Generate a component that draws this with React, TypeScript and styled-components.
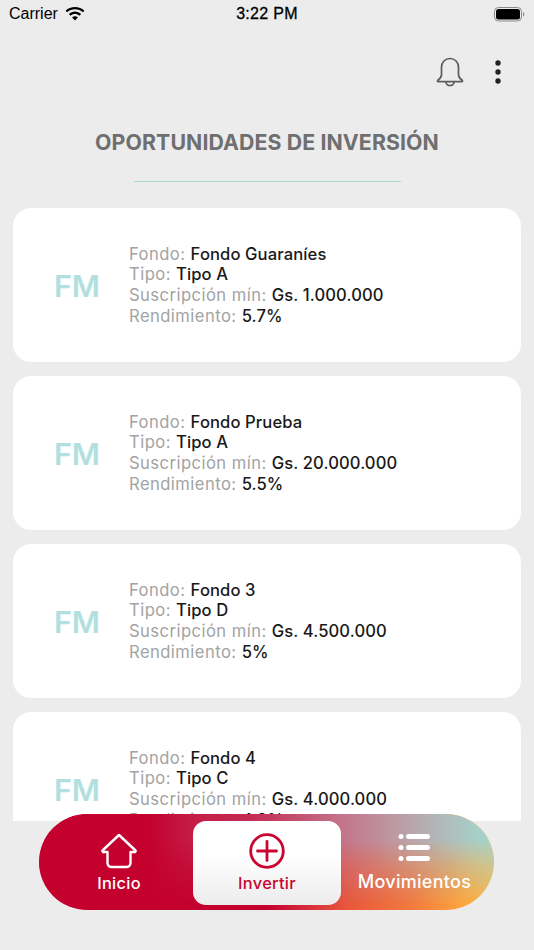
import React from "react";
import styled, { createGlobalStyle } from "styled-components";

const Global = createGlobalStyle`
  html, body { margin: 0; padding: 0; background: #ececec; }
  body { font-family: Inter, "Liberation Sans", sans-serif; }
`;

const Screen = styled.div`
  position: relative;
  width: 534px;
  height: 950px;
  overflow: hidden;
  background: #ececec;
  display: flex;
  flex-direction: column;
`;

const StatusBar = styled.div`
  height: 28px;
  flex: none;
  display: grid;
  grid-template-columns: 1fr auto 1fr;
  align-items: center;
  padding: 0 9px;
  font-family: "Liberation Sans", Arial, sans-serif;
  font-size: 16px;
  color: #000;
`;

const Carrier = styled.div`
  display: flex;
  align-items: center;
  gap: 7px;
`;

const Clock = styled.div`
  font-weight: 400;
  -webkit-text-stroke: 0.3px #000;
  letter-spacing: 0.3px;
`;

const Battery = styled.div`
  justify-self: end;
  display: flex;
`;

const ActionBar = styled.div`
  flex: none;
  height: 62px;
  display: flex;
  justify-content: flex-end;
  align-items: center;
  gap: 31px;
  padding: 0 33px 0 0;
  margin-top: 13px;
`;

const Title = styled.h1`
  margin: 28px 0 0;
  text-align: center;
  font-size: 21.3px;
  line-height: 22px;
  font-weight: 700;
  color: #6f6f6f;
  letter-spacing: 0.1px;
`;

const Divider = styled.div`
  flex: none;
  width: 267px;
  height: 1px;
  margin: 28px auto 26px;
  background: #a9d8d4;
`;

const List = styled.div`
  height: 613px;
  flex: none;
  overflow: hidden;
  padding: 0 13px;
  display: flex;
  flex-direction: column;
  gap: 14px;
`;

const Card = styled.div`
  flex: none;
  height: 154px;
  border-radius: 18px;
  background: #fff;
  display: flex;
  align-items: center;
`;

const Logo = styled.div`
  width: 116px;
  padding-left: 41px;
  box-sizing: border-box;
  font-size: 30.5px;
  font-weight: 600;
  color: #b2e0e0;
  flex: none;
  letter-spacing: -0.2px;
  margin-top: 1px;
`;

const Info = styled.div`
  display: flex;
  flex-direction: column;
`;

const Line = styled.div`
  font-size: 16.6px;
  line-height: 20.6px;
  white-space: nowrap;
  color: #a3a3a3;
  letter-spacing: 0.45px;
`;

const Value = styled.span`
  color: #191919;
  font-weight: 500;
  letter-spacing: 0.1px;
`;

const Nav = styled.nav`
  position: absolute;
  left: 39px;
  top: 814px;
  width: 455px;
  height: 96px;
  border-radius: 48px;
  box-sizing: border-box;
  padding: 7px 0 5px;
  display: grid;
  grid-template-columns: 154px 148px 153px;
  background: linear-gradient(90deg, #c4002e 0%, #c4002e 50%, #d4283a 58%, #e9583c 68%, #f27a3e 82%, #ffa83c 94%, #f8b850 100%);

  &::before {
    content: "";
    position: absolute;
    inset: 0;
    border-radius: inherit;
    background: linear-gradient(90deg, #c4002e 0%, #c4002e 24%, #c41e48 34%, #c42a52 46%, #c4728a 66%, #b9a6ac 82%, #a6cfc8 96%, #a6d2ca 100%);
    -webkit-mask-image: linear-gradient(180deg, #000 0%, #000 26%, rgba(0, 0, 0, 0.5) 55%, transparent 95%);
    mask-image: linear-gradient(180deg, #000 0%, #000 26%, rgba(0, 0, 0, 0.5) 55%, transparent 95%);
  }
`;

const Tab = styled.div<{ $active?: boolean; $shift?: number }>`
  position: relative;
  display: flex;
  flex-direction: column;
  align-items: center;
  border-radius: 13px;
  padding-top: 12px;
  transform: translateX(${(p) => p.$shift ?? 0}px);
  font-weight: 500;
  letter-spacing: 0.3px;
  color: ${(p) => (p.$active ? "#c8062f" : "#fff")};
  background: ${(p) => (p.$active ? "linear-gradient(180deg, #ffffff 0%, #ffffff 40%, #ececec 100%)" : "transparent")};
`;

const TabIcon = styled.svg`
  display: block;
  width: 36px;
  height: 36px;
`;

const TabLabel = styled.span<{ $large?: boolean }>`
  margin-top: ${(p) => (p.$large ? "3px" : "4px")};
  line-height: 20px;
  font-size: ${(p) => (p.$large ? "18px" : "16.4px")};
  white-space: nowrap;
`;

const funds = [
  { name: "Fondo Guaraníes", type: "Tipo A", min: "Gs. 1.000.000", rate: "5.7%" },
  { name: "Fondo Prueba", type: "Tipo A", min: "Gs. 20.000.000", rate: "5.5%" },
  { name: "Fondo 3", type: "Tipo D", min: "Gs. 4.500.000", rate: "5%" },
  { name: "Fondo 4", type: "Tipo C", min: "Gs. 4.000.000", rate: "4.8%" },
];

export default function App() {
  return (
    <Screen>
      <Global />
      <StatusBar>
        <Carrier>
          Carrier
          <svg width="20" height="15" viewBox="0 0 20 15" fill="#000">
            <path d="M10 2.2c3 0 5.8 1.1 7.9 3.1l1.5-1.6C16.900 1.300 13.600 0 10 0S3.100 1.300.6 3.700l1.500 1.600C4.200 3.300 7 2.200 10 2.200z" />
            <path d="M10 6.900c1.700 0 3.300.6 4.500 1.800l1.600-1.600C14.500 5.500 12.300 4.600 10 4.600s-4.500.9-6.100 2.500l1.600 1.600C6.700 7.500 8.300 6.900 10 6.900z" />
            <path d="M10 9.200c-1.100 0-2.100.4-2.900 1.200L10 13.500l2.900-3.100c-.8-.8-1.800-1.200-2.900-1.200z" />
          </svg>
        </Carrier>
        <Clock>3:22 PM</Clock>
        <Battery>
          <svg width="31" height="15" viewBox="0 0 31 15">
            <rect x="0.5" y="0.5" width="27" height="13.500" rx="4" fill="none" stroke="#8a8a8a" />
            <rect x="2" y="2" width="24" height="10.500" rx="2.500" fill="#000" />
            <path d="M29 5v4.500c.9-.3 1.300-1.200 1.300-2.200S29.900 5.300 29 5z" fill="#8a8a8a" />
          </svg>
        </Battery>
      </StatusBar>
      <ActionBar>
        <svg width="28" height="30" viewBox="0 0 28 30" fill="none" stroke="#5c5c5c" strokeWidth="1.700" strokeLinejoin="round">
          <path d="M14 1.500c-4.900 0-8.500 3.700-8.500 8.800v7.500c0 2.300-1.200 3.700-3.600 5.500-.8.600-.4 1.400.4 1.400h23.400c.8 0 1.200-.8.400-1.400-2.400-1.800-3.600-3.200-3.600-5.500v-7.500c0-5.100-3.600-8.800-8.500-8.800z" />
          <path d="M10 25c0 2 1.800 3.500 4 3.500s4-1.500 4-3.500" />
        </svg>
        <svg width="6" height="24" viewBox="0 0 6 24" fill="#222">
          <circle cx="3" cy="3" r="2.700" />
          <circle cx="3" cy="12" r="2.700" />
          <circle cx="3" cy="21" r="2.700" />
        </svg>
      </ActionBar>
      <Title>OPORTUNIDADES DE INVERSIÓN</Title>
      <Divider />
      <List>
        {funds.map((f) => (
          <Card key={f.name}>
            <Logo>FM</Logo>
            <Info>
              <Line>Fondo: <Value>{f.name}</Value></Line>
              <Line>Tipo: <Value>{f.type}</Value></Line>
              <Line>Suscripción mín: <Value>{f.min}</Value></Line>
              <Line>Rendimiento: <Value>{f.rate}</Value></Line>
            </Info>
          </Card>
        ))}
      </List>
      <Nav>
        <Tab $shift={3}>
          <TabIcon viewBox="0 0 36 36" fill="none" stroke="#fff" strokeWidth="2.400" strokeLinejoin="round" strokeLinecap="round">
            <path d="M18 2 L2 17 a1 1 0 0 0 1 2 H6.500 V30 a4 4 0 0 0 4 4 H25.500 a4 4 0 0 0 4-4 V19 H33 a1 1 0 0 0 1-2 Z" />
          </TabIcon>
          <TabLabel>Inicio</TabLabel>
        </Tab>
        <Tab $active>
          <TabIcon viewBox="0 0 36 36" fill="none" stroke="#c8062f" strokeWidth="2.800" strokeLinecap="round">
            <circle cx="18" cy="18" r="16.300" />
            <path d="M18 8.500v19M8.500 18h19" />
          </TabIcon>
          <TabLabel>Invertir</TabLabel>
        </Tab>
        <Tab $shift={-3}>
          <TabIcon viewBox="0 0 36 36" fill="#fff">
            <circle cx="4" cy="3.500" r="2.500" />
            <circle cx="4" cy="14.500" r="2.500" />
            <circle cx="4" cy="25.500" r="2.500" />
            <rect x="9" y="1" width="24" height="5" rx="2.500" />
            <rect x="9" y="12" width="24" height="5" rx="2.500" />
            <rect x="9" y="23" width="24" height="5" rx="2.500" />
          </TabIcon>
          <TabLabel $large>Movimientos</TabLabel>
        </Tab>
      </Nav>
    </Screen>
  );
}
